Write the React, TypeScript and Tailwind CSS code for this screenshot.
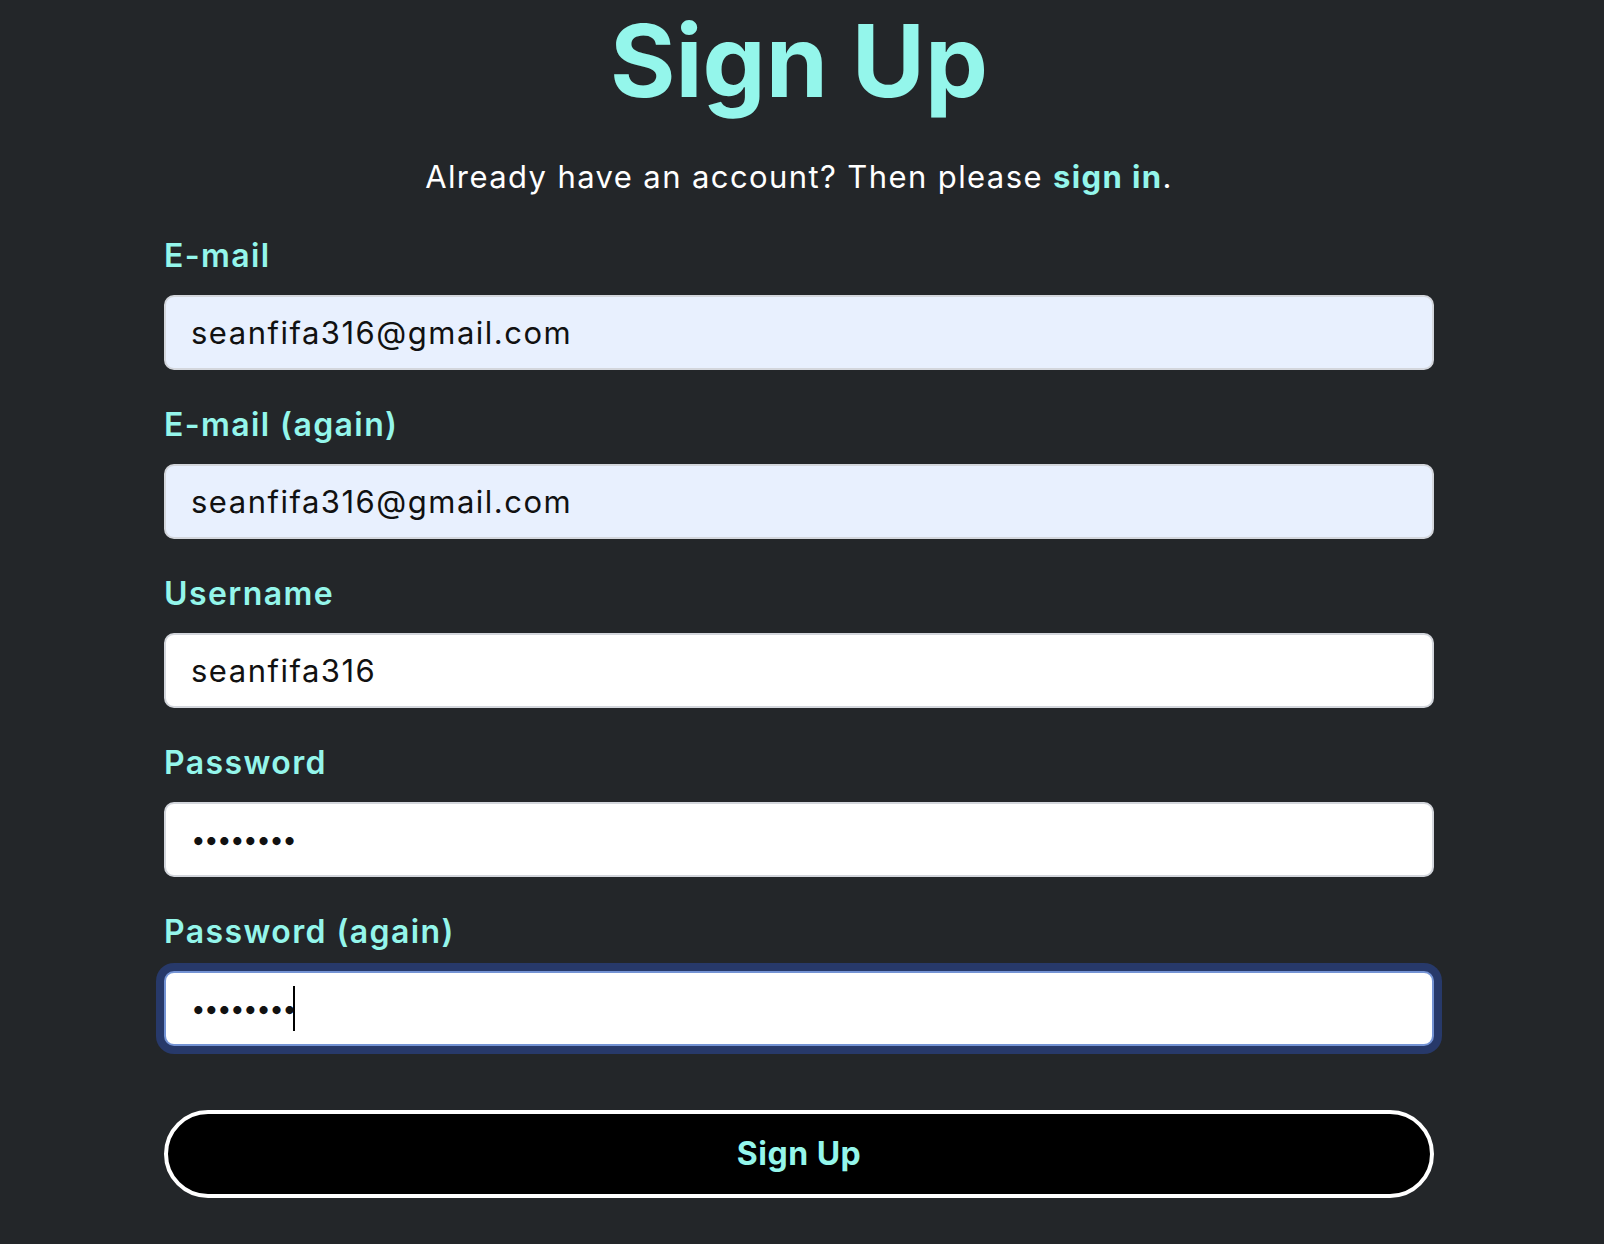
import React from 'react';

const font = { fontFamily: 'Inter, "Noto Sans", sans-serif' };

interface FieldProps {
    label: string;
    value: string;
    type?: string;
    autofill?: boolean;
    focused?: boolean;
}

function Field({ label, value, type = 'text', autofill, focused }: FieldProps) {
    const base = 'w-full h-[75px] rounded-[10px] px-[25px] text-[#111] outline-none';
    const text = type === 'password'
        ? 'text-[26px] tracking-[-1.6px]'
        : 'text-[31px] tracking-[1.5px]';
    const skin = focused
        ? 'bg-white border-2 border-[#7493d4] ring-[8px] ring-[#27396a]'
        : autofill
            ? 'bg-[#e8f0fe] border-2 border-[#d3d6dc]'
            : 'bg-white border-2 border-[#d3d6dc]';

    return (
        <div className="flex flex-col">
            <label className="text-[32px] leading-[38px] font-semibold tracking-[1.4px] text-[#94f6eb]">
                {label}
            </label>
            <div className="relative mt-[20px]">
                <input
                    readOnly
                    type={type}
                    value={value}
                    className={`${base} ${text} ${skin}`}
                    style={font}
                />
                {/* caret of the focused field */}
                {focused && (
                    <span className="absolute left-[129px] top-[15px] h-[45px] w-[2px] bg-black" />
                )}
            </div>
        </div>
    );
}

export default function App() {
    return (
        <div className="min-h-screen bg-[#232629] pb-[48px]" style={font}>
            <div className="w-[1270px] ml-[164px] flex flex-col">
                <h1 className="pt-[1px] text-center text-[100px] leading-[120px] font-bold text-[#94f6eb]">
                    Sign Up
                </h1>
                <p className="mt-[38px] text-center text-[31px] leading-[36px] tracking-[1.4px] text-white">
                    Already have an account? Then please{' '}
                    <a href="#" className="font-bold text-[#94f6eb]">sign in</a>.
                </p>

                <div className="mt-[42px] flex flex-col gap-[36px]">
                    <Field label="E-mail" value="seanfifa316@gmail.com" autofill />
                    <Field label="E-mail (again)" value="seanfifa316@gmail.com" autofill />
                    <Field label="Username" value="seanfifa316" />
                    <Field label="Password" value="12345678" type="password" />
                    <Field label="Password (again)" value="12345678" type="password" focused />
                </div>

                <button className="mt-[64px] h-[88px] w-full rounded-full border-4 border-white bg-black text-[32px] font-bold tracking-[0.5px] text-[#94f6eb]">
                    Sign Up
                </button>
            </div>
        </div>
    );
}
